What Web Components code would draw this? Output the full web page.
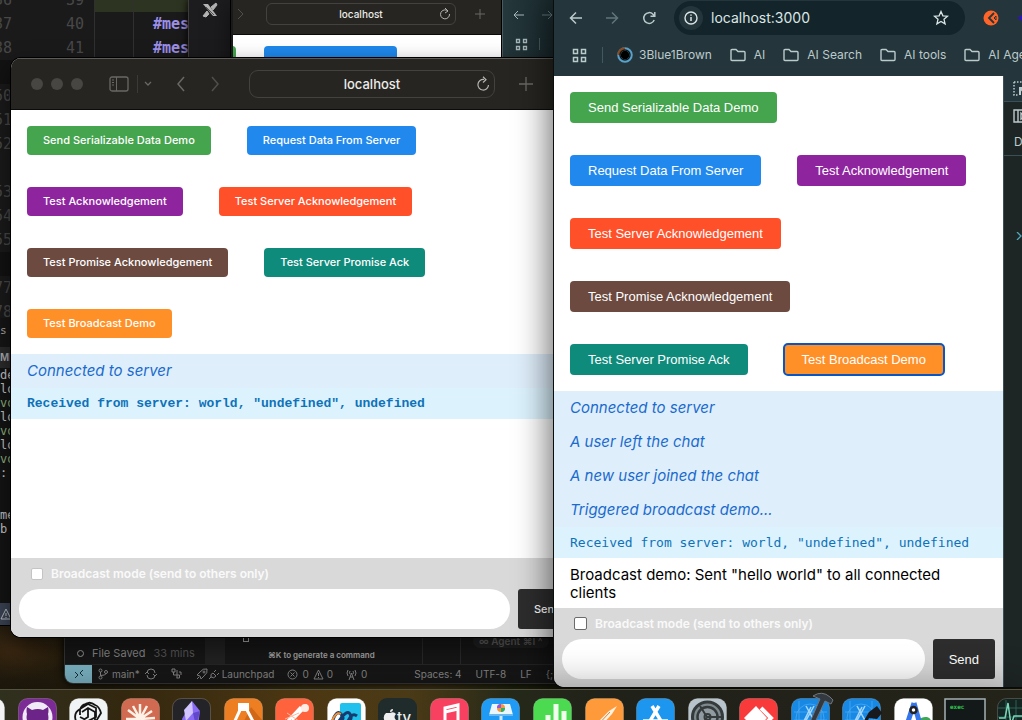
<!DOCTYPE html>
<html lang="en">
<head>
<meta charset="utf-8">
<title>Socket chat demo</title>
<style>
html,body{margin:0;height:100%;background:#15130d}
body{font-family:Inter,"Liberation Sans",sans-serif;overflow:hidden}
</style>
</head>
<body>
<desk-top>
  <code-editor></code-editor>
  <side-window></side-window>
  <safari-window class="back" small>
    <chat-page compact>
      <action-button slot="actions" tint="#45a44e"></action-button>
      <action-button slot="actions" tint="#1f88ec">Request Data From Server</action-button>
    </chat-page>
  </safari-window>
  <chrome-sliver></chrome-sliver>
  <status-window></status-window>
  <safari-window class="front">
    <chat-page>
      <action-button slot="actions" tint="#45a44e">Send Serializable Data Demo</action-button>
      <action-button slot="actions" tint="#2189ee">Request Data From Server</action-button>
      <action-button slot="actions" tint="#8f249f">Test Acknowledgement</action-button>
      <action-button slot="actions" tint="#ff5029">Test Server Acknowledgement</action-button>
      <action-button slot="actions" tint="#6c4a40">Test Promise Acknowledgement</action-button>
      <action-button slot="actions" tint="#0f8b7c">Test Server Promise Ack</action-button>
      <action-button slot="actions" tint="#ff9027">Test Broadcast Demo</action-button>
      <chat-line kind="system">Connected to server</chat-line>
      <chat-line kind="data">Received from server: world, "undefined", undefined</chat-line>
    </chat-page>
  </safari-window>
  <chrome-window>
    <chat-page>
      <action-button slot="actions" tint="#45a44e">Send Serializable Data Demo</action-button>
      <action-button slot="actions" tint="#2189ee">Request Data From Server</action-button>
      <action-button slot="actions" tint="#8f249f">Test Acknowledgement</action-button>
      <action-button slot="actions" tint="#ff5029">Test Server Acknowledgement</action-button>
      <action-button slot="actions" tint="#6c4a40">Test Promise Acknowledgement</action-button>
      <action-button slot="actions" tint="#0f8b7c">Test Server Promise Ack</action-button>
      <action-button slot="actions" tint="#ff9027" focused>Test Broadcast Demo</action-button>
      <chat-line kind="system">Connected to server</chat-line>
      <chat-line kind="system">A user left the chat</chat-line>
      <chat-line kind="system">A new user joined the chat</chat-line>
      <chat-line kind="system">Triggered broadcast demo...</chat-line>
      <chat-line kind="data">Received from server: world, "undefined", undefined</chat-line>
      <chat-line>Broadcast demo: Sent "hello world" to all connected clients</chat-line>
    </chat-page>
  </chrome-window>
  <app-dock></app-dock>
</desk-top>
<script>
const define = (name, markup) => customElements.define(name, class extends HTMLElement {
  constructor() {
    super();
    this.attachShadow({ mode: 'open' }).innerHTML = typeof markup === 'function' ? markup(this) : markup;
  }
});
const svg = (w, h, body, extra = '') =>
  `<svg width="${w}" height="${h}" viewBox="0 0 ${w} ${h}" fill="none" stroke="currentColor" ${extra} aria-hidden="true">${body}</svg>`;

/* Desktop: windows are placed freely over the wallpaper */
define('desk-top', `
<style>
:host{display:block;position:relative;height:100vh;overflow:hidden;
 background:radial-gradient(ellipse 60px 30px at 15px 650px,#3b2812,transparent),linear-gradient(90deg,#201a0d,#2d2410 20%,#3c3212 30%,#453716 42%,#242a10 50%,#15150e 60%)}
::slotted(*){position:absolute}
::slotted(code-editor){left:0;top:0;width:190px;bottom:94px}
::slotted(side-window){left:188px;top:0;width:43px;height:70px}
::slotted(.back){left:231px;top:0;width:270px;height:70px}
::slotted(chrome-sliver){left:502px;top:0;width:52px;height:70px}
::slotted(status-window){left:64px;bottom:36px;width:500px;height:60px}
::slotted(.front){left:11px;top:58px;width:574px;bottom:83px}
::slotted(chrome-window){left:554px;top:0;right:0;bottom:33px}
::slotted(app-dock){left:0;right:0;bottom:0;height:31px}
</style><slot></slot>`);

/* Code editor with its diff gutter and terminal panel */
define('code-editor', `
<style>
:host{display:grid;grid-template-columns:12px 1fr;background:#1a1a1a;overflow:hidden;
 font:15px/24px "DejaVu Sans Mono",monospace;color:#484848;border-bottom:1px solid #000}
.left{overflow:hidden;display:flex;flex-direction:column}
.left div{display:flex;justify-content:flex-end;flex:none;height:24px;white-space:pre}
.left .fold{background:#121212}
.left .first{margin-top:-12px}
.left .half{height:18px;overflow:hidden}
.left .tab,.left .head,.left .term,.left .term div{justify-content:flex-start}
.left .tab{height:29px;font-size:11px;line-height:26px;color:#aaa;background:#161616}
.left .head{height:21px;font:bold 11px/21px "Liberation Sans",sans-serif;color:#aaa;background:#2b2b2b}
.left .term{flex:1;flex-direction:column;background:#141414;font-size:12px;line-height:14px;color:#c4c4c4}
.left .term div{height:14px}
.left .g{color:#8fb27c}
.left .bar{height:22px;background:#3a4353;color:#b8bcc4;justify-content:flex-start;align-items:center}
.code{display:grid;grid-template-columns:83px 39px 1fr;grid-auto-rows:24px;align-content:start;margin-top:-12px}
.n{padding-left:54px}
.code>*{border-right:1px solid #303030}
.code .t{border:0;color:#9c8fe8;padding-left:19px;font-weight:bold;white-space:pre}
.o{background:#2e3422}
</style>
<div class="left">
 <div class="first">36</div><div>37</div><div>38</div><div class="fold"></div>
 <div>50</div><div>51</div><div>52</div><div></div><div>53</div><div>54</div><div>55</div><div class="fold"></div>
 <div>77</div><div class="half">78</div>
 <div class="tab">s</div><div class="head">MI</div>
 <div class="term"><div>de</div><div>lo</div><div class="g">vo</div><div>lo</div><div class="g">vo</div><div>lo</div><div class="g">vo</div><div>: r</div><div></div><div></div><div>me</div><div>b</div></div>
 <div class="bar">${svg(12, 12, '<path d="M6 1L11 11H1Z M6 5v3 M6 9v1"/>')}</div>
</div>
<div class="code">
 <span class="n">39</span><span class="o"></span><span class="t o"></span>
 <span class="n">40</span><span></span><span class="t">#mes</span>
 <span class="n">41</span><span></span><span class="t">#mes</span>
</div>`);

define('side-window', `
<style>
:host{display:flex;justify-content:center;background:#1c1c1f;border:1px solid #3c3c3c;border-width:0 1px;box-sizing:border-box;color:#b4b4b4;box-shadow:0 0 8px #000}
svg{margin-top:2px}
</style>
${svg(18, 16, '<path d="M2 2h5l9 12h-4Z" fill="currentColor" stroke="none"/><path d="M2 14l4-5 2 3-3 3Z M15 1l-5 4 2 3 4-5Z" fill="currentColor" stroke="currentColor"/><path d="M5 5l8 8" stroke="#555"/>')}`);

/* Safari window: toolbar plus slotted page */
define('safari-window', el => {
  const s = el.hasAttribute('small');
  return `
<style>
:host{display:flex;flex-direction:column;box-sizing:border-box;overflow:hidden;background:#fff;
 --chat-size:15px;--btn:500 11px/13px Inter,sans-serif;--mono:bold 13px/15px "Liberation Mono",monospace;--check-border:#c4c4c4;--check:12px;
 box-shadow:0 0 0 1px #000,0 8px 22px rgba(0,0,0,.55)}
:host([small]){--btn:500 9px/13px Inter,sans-serif;--btn-pad:10px;border-left:2px solid #1a1a1a}
:host(.front){border-radius:10px}
header{flex:none;height:52px;box-sizing:border-box;border-bottom:1px solid #0b0b0a;background:#262521;color:#696864;display:flex;align-items:center;box-shadow:inset 0 1px #5b5a56}
:host([small]) header{height:35px;box-shadow:none}
header svg{flex:none}
.dots{display:flex;gap:8px;margin-left:20px}
.dots i{width:12px;height:12px;border-radius:50%;background:#474642}
.side{margin-left:26px}.sep{width:1px;height:18px;background:#3b3a36;margin-left:8px}
.menu{margin-left:6px}.bk{margin-left:24px}.fw{margin-left:24px;color:#504f4b}
.url{box-sizing:border-box;width:246px;height:28px;margin-left:29px;border:1px solid #43423e;border-radius:9px;display:grid;grid-template-columns:1fr auto 1fr;align-items:center;color:#ecebe7;font:500 13px/16px Inter,sans-serif}
.url svg{justify-self:end;margin-right:4px;color:#b5b4b0}
.plus{margin-left:24px}
:host([small]) .url{width:190px;height:22px;margin:-7px 0 0 21px;font-size:10px;border-radius:6px}
:host([small]) .plus,:host([small]) .fw{margin-top:-7px}
:host([small]) .plus{margin-left:18px}:host([small]) .fw{margin-left:4px}
::slotted(chat-page){flex:1;min-height:0}
</style>
<header>
${s ? '' : `<span class="dots"><i></i><i></i><i></i></span>
${svg(20, 16, '<rect x="1" y="1" width="18" height="14" rx="2" stroke-width="1.3"/><path d="M7.500 1v14"/><path d="M3 4h2M3 6.500h2M3 9h2" />', 'class="side"')}
<span class="sep"></span>${svg(8, 6, '<path d="M1 1l3 3 3-3" stroke-width="1.3"/>', 'class="menu"')}
${svg(10, 16, '<path d="M8 1L2 8l6 7" stroke-width="1.500"/>', 'class="bk"')}`}
${s ? svg(8, 12, '<path d="M1 1l5 5-5 5"/>', 'class="fw"') : svg(10, 16, '<path d="M2 1l6 7-6 7" stroke-width="1.500"/>', 'class="fw"')}
<div class="url"><span></span><span>localhost</span>${svg(s ? 12 : 14, s ? 13 : 16, s ? '<path d="M9 4A4.500 4.500 0 1 0 10.500 7M6 1l3 3-3 2"/>' : '<path d="M8 3.500A5.300 5.300 0 1 0 12.500 9M7 .8l3 2.900-3 2.800" stroke-width="1.200"/>')}</div>
${s ? svg(12, 12, '<path d="M6 1v10M1 6h10"/>', 'class="plus"') : svg(14, 14, '<path d="M7 0v14M0 7h14" stroke-width="1.300"/>', 'class="plus"')}
</header>
<slot></slot>`;
});

/* Chat page: wrapped action buttons, messages, composer */
define('chat-page', el => `
<style>
:host{display:flex;flex-direction:column;background:#fff;overflow:hidden}
.actions{display:flex;flex-wrap:wrap;gap:32px 36px;padding:16px}
:host([compact]) .actions{flex-wrap:nowrap;gap:28px;padding:11px 0;margin-left:-17px}
main{flex:1;min-height:0;overflow:hidden}
form{flex:none;background:#d9d9d9;padding:0 8px 8px}
label{display:flex;align-items:center;height:31px;gap:8px;color:#f9f9f9;font:600 12px/16px Inter,sans-serif}
[type=checkbox]{appearance:none;box-sizing:border-box;width:var(--check);height:var(--check);margin:0 0 0 12px;border:1px solid var(--check-border);border-radius:2px;background:#fff}
.row{display:flex;gap:8px}
[type=text]{flex:1;min-width:0;height:40px;box-sizing:border-box;border:0;border-radius:20px;background:#fff;padding:0 16px;outline:0}
.row button{height:40px;border:0;border-radius:3px;background:#2d2d2d;color:#fff;padding:0 16px;font:var(--btn)}
</style>
<div class="actions"><slot name="actions"></slot></div>
${el.hasAttribute('compact') ? '' : `<main><slot></slot></main>
<form onsubmit="return false"><label><input type="checkbox">Broadcast mode (send to others only)</label>
<div class="row"><input type="text" aria-label="Message" autocomplete="off"><button>Send</button></div></form>`}`);

define('action-button', el => `
<style>
:host{display:block;flex:none}
button{display:block;box-sizing:border-box;min-height:24px;border:0;margin:0;padding:8px var(--btn-pad,16px);border-radius:4px;background:${el.getAttribute('tint')};color:#fff;font:var(--btn);white-space:nowrap}
:host([focused]) button{outline:2px solid #0a55c4;outline-offset:-1px}
</style><button type="button"><slot></slot></button>`);

define('chat-line', `
<style>
:host{display:block;padding:8px 16px;font-size:var(--chat-size);line-height:18px;color:#000}
:host([kind=system]){background:#dfeefb;color:#1a6bcd;font-style:italic}
:host([kind=data]){background:#dcf3fe;color:#0f72b8;font:var(--mono)}
</style><slot></slot>`);

/* Chrome window behind the main one */
define('chrome-sliver', `
<style>
:host{display:flex;flex-direction:column;background:linear-gradient(90deg,#25383c,#1a2a2e);border-left:1px solid #4a5a5e;box-sizing:border-box;color:#a9b8bb;overflow:hidden}
div{display:flex;align-items:center}
.a{height:30px;padding-left:10px;gap:16px}.b{height:28px;padding-left:12px;gap:11px}
i{width:1px;height:12px;background:#465b61}
</style>
<div class="a">${svg(12, 10, '<path d="M11 5H1M5 1L1 5l4 4"/>')}${svg(12, 10, '<path d="M1 5h10M7 1l4 4-4 4" stroke="#60757a"/>')}</div>
<div class="b">${svg(13, 13, '<path d="M1.500 1.500h3v3h-3zM8.500 1.500h3v3h-3zM1.500 8.500h3v3h-3zM8.500 8.500h3v3h-3z" stroke-width="1.300"/>')}<i></i></div>`);

/* Front Chrome window */
const folder = svg(16, 14, '<path d="M1 2.500q0-1 1-1h4l2 2h6q1 0 1 1v7q0 1-1 1H2q-1 0-1-1Z" stroke-width="1.400"/>');
define('chrome-window', `
<style>
:host{display:flex;flex-direction:column;overflow:hidden;border-radius:0 0 0 10px;background:#24363b;color:#bccacc;
 --chat-size:15px;--btn:13px/15px "Liberation Sans",Arial,sans-serif;--btn-pad:18px;--mono:13px/15px "DejaVu Sans Mono",monospace;--check-border:#6b6b6b;--check:13px;
 box-shadow:0 0 0 1px #0b0d0d,0 6px 34px 4px rgba(0,0,0,.6)}
.nav{height:36px;display:flex;align-items:center;white-space:nowrap;flex:none}
svg{flex:none}
.url{flex:none;box-sizing:border-box;width:291px;height:34px;border-radius:17px;background:#13252a;margin-left:18px;padding:0 16px 0 5px;display:flex;align-items:center;gap:8px;font:14px/18px Inter,sans-serif;color:#dce5e6}
.url span{flex:1}
.info{width:24px;height:24px;border-radius:50%;background:#24363b;display:grid;place-items:center}
.back{margin-left:15px}.fwd{margin-left:22px}.reload{margin-left:23px}.ext{margin-left:18px}
.marks{height:40px;display:flex;align-items:center;white-space:nowrap;font:12px/16px Inter,sans-serif;flex:none;padding:0 0 2px 18px;box-sizing:border-box}
.marks a{flex:none;color:inherit;text-decoration:none;display:flex;align-items:center;gap:8px;margin-right:18px}
.marks a:first-of-type{gap:6px}
.marks i{width:1px;height:16px;background:#43585e;margin:0 14px 0 15px;flex:none}
.body{flex:1;min-height:0;display:grid;grid-template-columns:1fr 19px}
::slotted(chat-page){min-height:0}
aside{overflow:hidden;background:#1e2525;border-left:1px solid #3a5056;display:flex;flex-direction:column}
.t1{height:26px;background:#24363b;border-bottom:1px solid #3a5056;box-sizing:border-box;padding:5px 0 0 9px}
.t2{height:54px;box-sizing:border-box;border-bottom:1px solid #3a5056;padding:7px 0 0 9px;white-space:nowrap;font:12px/16px Inter,sans-serif}
.t2 svg{display:block}
.t2 div{padding:11px 0 0 1px}
.p{color:#4fa8bd;padding:68px 0 0 12px}
</style>
<div class="nav">
${svg(14, 14, '<path d="M13 7H1.500M7 1.500L1.500 7 7 12.500" stroke-width="1.500"/>', 'class="back"')}
${svg(14, 14, '<path d="M1 7h11.500M7 1.500L12.500 7 7 12.500" stroke-width="1.500" stroke="#5f757a"/>', 'class="fwd"')}
${svg(14, 14, '<path d="M12.200 9A5.400 5.400 0 1 1 11 3.200L12.500 5M12.800 1v4.300H8.500" stroke-width="1.500"/>', 'class="reload"')}
<div class="url"><b class="info">${svg(14, 14, '<circle cx="7" cy="7" r="6" stroke-width="1.400"/><path d="M7 6v4M7 3.500v1.300" stroke-width="1.500"/>')}</b><span>localhost:3000</span>
${svg(16, 16, '<path d="M8 1.500l1.900 4.300 4.700.4-3.600 3.100 1.100 4.600L8 11.500l-4.100 2.400L5 9.300 1.400 6.200l4.700-.4Z" stroke-width="1.300"/>')}</div>
${svg(16, 16, '<circle cx="8" cy="8" r="7.500" fill="#ff6428" stroke="none"/><path d="M11 3L6 8l5 5" stroke="#24363b" stroke-width="1.800"/><path d="M13 6v4l-2-2Z" stroke="#24363b"/>', 'class="ext"')}
${svg(12, 14, '<path d="M6 1l2 4 4 2-4 2-2 4-2-4-4-2 4-2Z" fill="#2b15b8" stroke="none"/>', 'class="ext"')}
</div>
<div class="marks">
${svg(15, 15, '<path d="M1.500 1.500h4v4h-4zM9.500 1.500h4v4h-4zM1.500 9.500h4v4h-4zM9.500 9.500h4v4h-4z" stroke-width="1.500"/>')}<i></i>
<a href="#">${svg(16, 16, '<circle cx="8" cy="8" r="6" fill="#000" stroke="#5aa2cc" stroke-width="3.500"/><path d="M2 8a6 6 0 0 1 6-6" stroke="#8a4a22" stroke-width="3.500"/><circle cx="8" cy="8" r="5" stroke="#10181c" stroke-width="1.500"/>')}3Blue1Brown</a>
<a href="#">${folder}AI</a><a href="#">${folder}AI Search</a><a href="#">${folder}AI tools</a><a href="#">${folder}AI Agents</a>
</div>
<div class="body"><slot></slot>
<aside><div class="t1">${svg(16, 16, '<path d="M1 1h14M1 1v13h5" stroke-dasharray="1.500 1.500" stroke-width="1.500"/><path d="M7 14V7l7 0M7 7l6 6" stroke-width="2"/>')}</div>
<div class="t2">${svg(16, 14, '<path d="M1 1h14v12H1ZM5 1v12M8 4l4 3-4 3Z" stroke-width="1.400"/>')}<div>Default</div></div>
<div class="p">${svg(6, 8, '<path d="M1 0l4 4-4 4" stroke-width="1.300"/>')}</div></aside></div>`);

/* Editor window peeking out below, with its status bar */
define('status-window', `
<style>
:host{display:flex;flex-direction:column;overflow:hidden;border-radius:0 0 0 9px;background:#171717;border:1px solid #343434;border-top:0;box-sizing:border-box;color:#858585;font:11px/14px Inter,sans-serif;box-shadow:0 0 8px #000}
.top{flex:1;display:grid;grid-template-columns:140px 20px 198px 38px 1fr;min-height:0;white-space:nowrap}
.files{display:flex;align-items:center;gap:8px;padding:18px 0 0 12px}
.files i{width:5px;height:5px;border:1px solid #999;border-radius:50%}
.files span{color:#555}.gut{background:#222}
.cmd{font-weight:600;font-size:9px;line-height:12px;padding:12px 0 0 18px;border-right:1px solid #292929;color:#a5a5a5;display:flex;flex-direction:column;gap:7px}
.cmd i{width:4px;height:4px;border:1px solid #aaa}
.cmd span{padding-left:25px;font-size:8px}
.cell{border-right:1px solid #292929}
.agent{padding:10px 0 0 12px;font-size:10px;color:#5c5c5c;font-weight:600}
.agent span{background:#202020;border-radius:7px;padding:1px 6px}
footer{flex:none;height:18px;display:flex;align-items:center;border-top:1px solid #262626;white-space:nowrap;font-size:10px}
footer svg{flex:none}
.remote{align-self:stretch;width:27px;background:#7ab2c2;color:#173039;display:grid;place-items:center;margin-right:6px}
.branch{margin:0 5px 0 4px}.count{margin:0 4px 0 4px}
.changes{margin-left:13px}.rocket{margin-left:14px}.pad{margin:0 13px 0 3px}
.r{margin-left:auto;display:flex;gap:14px;padding-right:10px}
</style>
<div class="top"><div class="files"><i></i>File Saved<span>33 mins</span></div><div class="gut"></div>
<div class="cmd"><i></i><span>⌘K to generate a command</span></div><div class="cell"></div>
<div class="agent"><span>∞ Agent ⌘I ^</span></div></div>
<footer><div class="remote">${svg(10, 10, '<path d="M1 3l3 3-3 3M9 1L6 4l3 3"/>')}</div>
${svg(10, 12, '<circle cx="2.500" cy="2.500" r="1.500"/><circle cx="2.500" cy="9.500" r="1.500"/><circle cx="8" cy="4" r="1.500"/><path d="M2.500 4v4M8 5.500Q8 7.500 2.500 7.500"/>')}<span class="branch">main*</span>
${svg(12, 12, '<path d="M2 5a4 4 0 0 1 8 0M10 7a4 4 0 0 1-8 0M0 6l2-2 2 2M8 6l2 2 2-2"/>')}
${svg(12, 12, '<path d="M2 1h3v3H2ZM7 2v8M3.500 4v3h6v3h-3M9 4h2v3"/>', 'class="changes"')}
${svg(12, 12, '<path d="M1 7l3-3q3-4 7-3 1 4-3 7l-3 3-1-3ZM1 11l2-2"/><circle cx="8" cy="4" r="1"/>', 'class="rocket"')}
${svg(11, 12, '<path d="M1 11l2-2q-1-3 2-4l3 3q-2 3-5 1M6 4l2-2M9 7l2-2"/>')}<span class="pad">Launchpad</span>
${svg(11, 11, '<circle cx="5.500" cy="5.500" r="4.500"/><path d="M3.500 3.500l4 4m0-4l-4 4"/>')}<span class="count">0</span>
${svg(11, 11, '<path d="M5.500 1L10 10H1ZM5.500 4v3M5.500 8v1"/>')}<span class="pad">0</span>
${svg(11, 11, '<path d="M5.500 4L3 11M5.500 4L8 11M4 8h3M2 1q-2 3 0 6M9 1q2 3 0 6M4 2q-1 2 0 3M7 2q1 2 0 3"/>')}<span class="count">0</span>
<div class="r"><span>Spaces: 4</span><span>UTF-8</span><span>LF</span><span>{;</span></div></footer>`);

/* Dock: rounded application tiles that run off the lower screen edge */
const tile = (fill, art, extra = '') => svg(39, 39, `<rect x=".5" y=".5" width="38" height="38" rx="9" fill="${fill}" stroke="#ffffff30"/>${art}`, extra);
const blueprint = '<g stroke="#5cb4f5" stroke-width=".6"><circle cx="19" cy="20" r="14"/><path d="M3 14h33M3 22h33M8 3v33M30 3v33"/></g><path d="M12 25L20 9M15 8l10 18M23 8L13 26" stroke="#a5d8ff" stroke-width="1.500"/>';
define('app-dock', `
<style>
:host{display:block;box-sizing:border-box;border-top:1px solid #55533f;background:linear-gradient(90deg,#30301f,#33270f 12%,#4c3712 30%,#4b3a16 40%,#252919 50%,#202119 60%,#24231a);box-shadow:0 0 40px rgba(0,0,0,.4)}
div{display:flex;justify-content:space-between;margin:8px -14px 0 -34px}
svg{flex:none;overflow:visible}
</style>
<div>
${tile('#f3f3f3', '')}
${tile('#7c2a95', '<circle cx="19.500" cy="19" r="15" fill="#efeaf5" stroke="none"/><path d="M9 9l5 3q6-2 11 0l5-3q1 4 0 7 2 9-5 11H14q-7-3-5-11-1-3 0-7Z" fill="#6c2488" stroke="none"/>')}
${tile('#f1f4f5', '<g stroke="#151515" stroke-width="1.800"><path d="M11 17v-5q2-7 8-6l8 4v9l-8 4-8-4M14 8q6-6 12-1 4 1 6 8l-6 10M19 6l-8 5q-7 4-4 12M13 14l6-4 7 4v8M19 10v9l-8 5"/></g>')}
${tile('#d06a50', '<g stroke="#fff1e5" stroke-width="2.500"><path d="M19 21V6M19 21l7-13M19 21L12 8M19 21L7 12M19 21l12-8M19 21l15-1M19 21H5"/></g>')}
${tile('#242428', '<path d="M20 3l8 10-3 22-12-5-3-9Z" fill="#8a6cf4" stroke="none"/><path d="M20 3l-8 9 2 11 7-8Z" fill="#d2c5ff" stroke="none"/><path d="M21 15l7-2-4 16Z" fill="#6047cc" stroke="none"/>')}
${tile('#ee7e22', '<path d="M27 9l12 14v16H12Z" fill="#d06818" stroke="none"/><path d="M14 5h11v8H14Z" fill="#fff" stroke="none"/><path d="M16 12L9 27M23 12l8 15" stroke="#fff" stroke-width="3"/>')}
${tile('#ff633e', '<path d="M32 7L17 22M26 9L11 25" stroke="#fff" stroke-width="3"/><circle cx="30" cy="10" r="4" fill="#ffede5" stroke="none"/><path d="M12 15l12 8M10 21l14-6" stroke="#ffb6a0"/>')}
${tile('#fff', '<rect x="13" y="5" width="21" height="22" rx="2" fill="#20c1ec" stroke="none"/><path d="M5 25q4-14 9-9t-2 7q8-12 11-7t-2 7q4-9 9-5" stroke="#153b70" stroke-width="3"/><path d="M5 23q4-10 9-7" stroke="#f19034" stroke-width="2"/>')}
${svg(39, 39, '<rect width="39" height="39" rx="9" fill="#202b2b" stroke="none"/><path d="M12 14q3 0 3-3-3 0-3 3ZM12 15q4-2 6 1-3 3 0 6l-3 5H9q-6-8-1-12Z" fill="#eee" stroke="none"/><text x="19" y="25" fill="#eee" stroke="none" font-family="Inter,sans-serif" font-size="15" font-weight="500">tv</text>')}
${tile('#f84160', '<path d="M15 29V10l13-3v18M15 14l13-3" stroke="#fff" stroke-width="3"/><circle cx="12" cy="27" r="4" fill="#fff" stroke="none"/>')}
${tile('#209bf5', '<path d="M11 6h18l3 11H8Z" fill="#e8f6ff" stroke="none"/><circle cx="20" cy="10" r="4" fill="#fa973a" stroke="none"/><path d="M20 10V6a4 4 0 0 0-4 4Z" fill="#9356df" stroke="none"/><path d="M20 10h4a4 4 0 0 1-4 4Z" fill="#22b269" stroke="none"/><path d="M20 17v12" stroke="#cce8ff" stroke-width="3"/><path d="M8 17h24" stroke="#68b8ef" stroke-width="2"/>')}
${tile('#4bda50', '<g stroke="#efffeb" stroke-width="5"><path d="M15 17v22M23 6v33M31 13v26"/></g>')}
${tile('#ff9a3b', '<path d="M32 8l-5 8-12 13-4-3 13-13Z" fill="#fff2de" stroke="none"/><path d="M25 14L9 31" stroke="#c78550"/>')}
${tile('#1c96ee', '<path d="M16 8l12 20M23 8L11 28M7 23h25" stroke="#fff" stroke-width="3.500"/>')}
${tile('#b8c4cb', '<g stroke="#353b3d"><circle cx="19.500" cy="19" r="15" stroke-width="3" fill="#7e898d"/><circle cx="19.500" cy="19" r="10" stroke-width="2.500" fill="#8f9ba0"/><circle cx="19.500" cy="19" r="3" stroke-width="2"/><path d="M19 19L12 8M19 19h15M19 19L12 33" stroke-width="2"/></g>')}
${tile('#f83b3a', '<path d="M5 20L17 8l11 12-11 12Z" fill="#fff" stroke="none"/><path d="M22 10l10 10-10 10" stroke="#fff" stroke-width="4"/>')}
${tile('#1789e4', blueprint + '<path d="M22 1q9-6 17 1l3 3-2 4-6-3-14 30-4-2L29 4Z" fill="#333940" stroke="#70777c" transform="translate(0 -3)"/>')}
${tile('#1789e4', blueprint + '<path d="M27 14l8-6 5 7-5 6-8-1-7 16-4-3Z" fill="#17191c" stroke="none"/>')}
${tile('#fff', '<path d="M24 28q0-10 9-9 5 1 5 9Z" fill="#3aa757" stroke="none"/><path d="M20 5l-8 25M20 5l7 25" stroke="#3676ea" stroke-width="5"/><circle cx="19.500" cy="12" r="3" stroke="#222" stroke-width="2.500" fill="#fff"/><path d="M9 24q10 6 21 0" stroke="#3676ea" stroke-width="4"/>')}
${svg(39, 39, '<rect x="0" y="1" width="40" height="38" fill="#131918" stroke="#a5b0b3" stroke-width="1.500"/><text x="5" y="11" fill="#34c751" stroke="none" font-family="DejaVu Sans Mono,monospace" font-size="6" font-weight="700">exec</text>')}
${tile('#142420', '<g stroke="#2a6256" stroke-width="1"><path d="M1 10h37M1 19h37M9 2v35M19 2v35M29 2v35"/></g><path d="M2 20h6l3-15 3 22 3-9h22" stroke="#79d6b9" stroke-width="1.500"/>')}
</div>`);
</script>
</body>
</html>
